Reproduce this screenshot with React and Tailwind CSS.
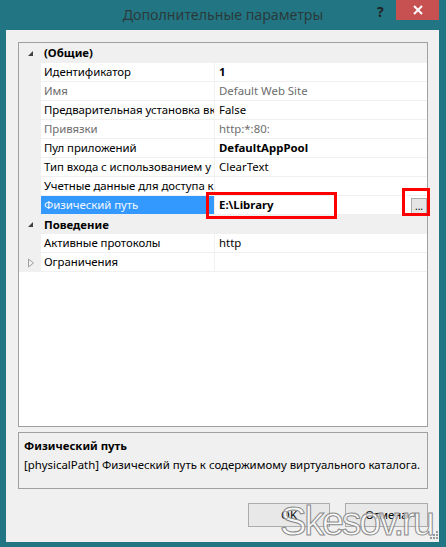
import React from "react";

const rows = [
  { cat: true, name: "(Общие)" },
  { name: "Идентификатор", value: "1", bold: true },
  { name: "Имя", value: "Default Web Site", disabled: true },
  { name: "Предварительная установка вк", value: "False" },
  { name: "Привязки", value: "http:*:80:", disabled: true },
  { name: "Пул приложений", value: "DefaultAppPool", bold: true },
  { name: "Тип входа с использованием у", value: "ClearText" },
  { name: "Учетные данные для доступа к", value: "" },
  { name: "Физический путь", value: "E:\\Library", bold: true, selected: true },
  { cat: true, name: "Поведение" },
  { name: "Активные протоколы", value: "http" },
  { name: "Ограничения", value: "", collapsed: true },
];

function CatArrow() {
  return (
    <svg width="7" height="7" viewBox="0 0 7 7">
      <path d="M6 1 L6 6 L1 6 Z" fill="#404040" />
    </svg>
  );
}

function CollapsedArrow() {
  return (
    <svg width="8" height="10" viewBox="0 0 8 10">
      <path d="M1.5 1 L6.5 5 L1.5 9 Z" fill="none" stroke="#a0a0a0" strokeWidth="1" />
    </svg>
  );
}

function Row({ row, first }) {
  if (row.cat) {
    return (
      <div className={`flex items-center bg-[#f0f0f0] ${first ? "h-[20px]" : "h-[19px]"}`}>
        <div className="w-[22px] flex justify-center pl-[1px]">
          <CatArrow />
        </div>
        <span className="pl-[3px] font-bold text-black">{row.name}</span>
      </div>
    );
  }
  return (
    <div className="relative flex h-[19px]">
      <div className="w-[22px] shrink-0 bg-[#f0f0f0] flex items-center justify-center pl-[2px]">
        {row.collapsed && <CollapsedArrow />}
      </div>
      <div
        className={`w-[174px] shrink-0 flex items-center pl-[3px] overflow-hidden whitespace-nowrap tracking-[-0.05px] border-b border-r border-[#f0f0f0] ${
          row.selected ? "bg-[#3399ff] text-[#f4f8ff]" : row.disabled ? "text-[#6d6d6d]" : "text-black"
        }`}
      >
        {row.name}
      </div>
      <div
        className={`flex-1 flex items-center pl-[4px] whitespace-nowrap border-b border-[#f0f0f0] ${
          row.bold ? "font-bold" : ""
        } ${row.disabled ? "text-[#6d6d6d]" : "text-black"}`}
      >
        {row.value}
      </div>
      {row.selected && (
        <>
          <div className="absolute left-[187px] top-[-4px] w-[131px] h-[27px] border-[3px] border-[#ff0000]" />
          <div className="absolute left-[392px] top-[2px] w-[16px] h-[16px] border border-[#adadad] bg-[#e5e5e5] flex items-end justify-center text-[10px] leading-[10px] pb-[2px] text-black">
            ...
          </div>
          <div className="absolute left-[383px] top-[-8px] w-[28px] h-[28px] border-[3px] border-[#ff0000]" />
        </>
      )}
    </div>
  );
}

export default function App() {
  return (
    <div
      className="relative w-[446px] h-[547px] bg-[#227683] flex flex-col overflow-hidden text-[11.4px]"
      style={{ fontFamily: '"Noto Sans", "Open Sans", sans-serif' }}
    >
      {/* title bar */}
      <div className="relative h-[30px] shrink-0 flex items-center justify-center">
        <span className="text-[14.2px] text-[#2a3a3c] pb-[1px]">Дополнительные параметры</span>
        <span className="absolute left-[377px] top-[1px] text-[14px] font-bold text-[#222]">?</span>
        <div className="absolute left-[396px] top-0 w-[43px] h-[20px] bg-[#c75050] flex items-center justify-center">
          <svg width="10" height="10" viewBox="0 0 10 10">
            <path d="M1 1 L9 9 M9 1 L1 9" stroke="#fff" strokeWidth="2" />
          </svg>
        </div>
      </div>

      {/* client area */}
      <div className="ml-[6px] mr-[7px] mb-[5px] flex-1 bg-[#f0f0f0] flex flex-col pt-[12px] pl-[12px] pr-[11px]">
        {/* property grid */}
        <div className="h-[385px] border border-[#a0a0a0] bg-white flex flex-col">
          {rows.map((r, i) => (
            <Row key={i} row={r} first={i === 0} />
          ))}
        </div>

        {/* description */}
        <div className="mt-[5px] h-[57px] border border-[#a0a0a0] bg-[#f0f0f0] pl-[5px] pt-[3px]">
          <div className="font-bold text-black leading-[19px]">Физический путь</div>
          <div className="text-black leading-[19px] whitespace-nowrap">
            [physicalPath] Физический путь к содержимому виртуального каталога.
          </div>
        </div>

        {/* buttons */}
        <div className="mt-[14px] flex justify-end gap-[15px]">
          <button className="w-[82px] h-[24px] border border-[#acacac] bg-[#e8e8e8] text-black text-[11.4px]">
            OK
          </button>
          <button className="w-[83px] h-[24px] border border-[#acacac] bg-[#e8e8e8] text-black text-[11.4px]">
            Отмена
          </button>
        </div>
      </div>

      {/* resize grip */}
      <div className="absolute left-[430px] top-[531px] grid grid-cols-3 gap-[1px]">
        {[0, 1, 2, 3, 4, 5, 6, 7, 8].map((i) => (
          <div
            key={i}
            className={`w-[2px] h-[2px] ${[2, 4, 5, 6, 7, 8].includes(i) ? "bg-[#9a9a9a]" : "bg-transparent"}`}
          />
        ))}
      </div>

      {/* watermark */}
      <div
        className="absolute left-[280px] top-[501px] text-[40px] leading-[40px] text-[#ffffffb3] [-webkit-text-stroke:1px_#8a8a8a] tracking-[-2.5px]"
        style={{ fontFamily: '"Liberation Sans", sans-serif' }}
      >
        Skesov.ru
      </div>
    </div>
  );
}
